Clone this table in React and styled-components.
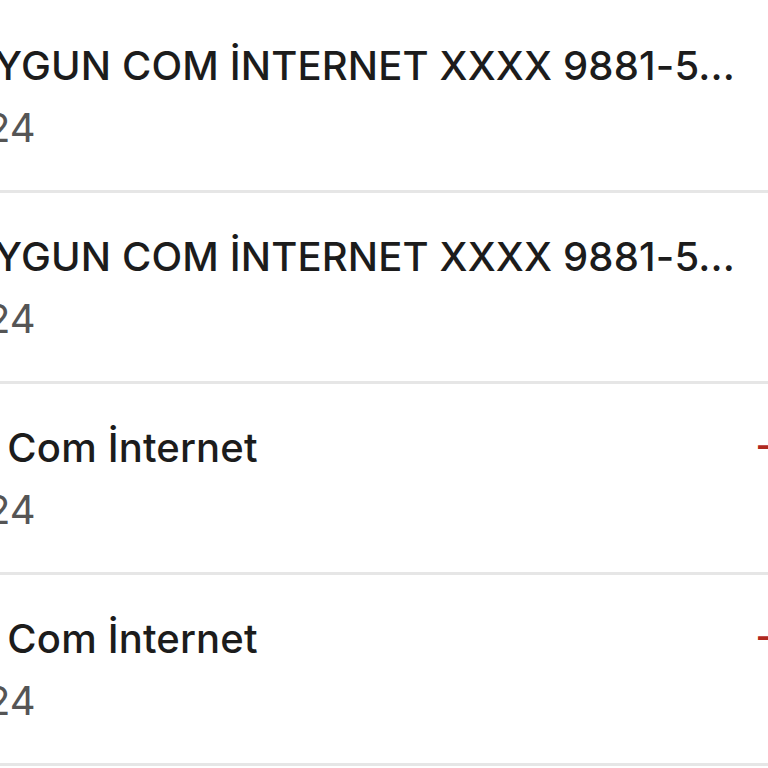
import React from "react";
import styled, { createGlobalStyle } from "styled-components";

const Global = createGlobalStyle`
  html, body {
    margin: 0;
    padding: 0;
    background: #ffffff;
    overflow: hidden;
  }
  body {
    font-family: Inter, "Noto Sans", "Liberation Sans", sans-serif;
  }
`;

const Viewport = styled.div`
  width: 768px;
  height: 768px;
  overflow: hidden;
  background: #ffffff;
`;

const List = styled.ul`
  list-style: none;
  margin: 0 0 0 -125px;
  padding: 2px 0 0;
  width: 1124px;
`;

const Row = styled.li`
  display: grid;
  grid-template-columns: minmax(0, 1fr) auto;
  column-gap: 24px;
  box-sizing: border-box;
  height: 191px;
  padding: 40px 0 0;
  border-bottom: 3px solid #e6e6e6;
`;

const Info = styled.div`
  display: flex;
  flex-direction: column;
  gap: 14px;
  min-width: 0;
`;

const Title = styled.div`
  font-size: 40px;
  line-height: 48px;
  font-weight: 500;
  letter-spacing: 0.15px;
  color: #1c1c1c;
  white-space: nowrap;
  overflow: hidden;
`;

const DateText = styled.div`
  font-size: 40px;
  line-height: 48px;
  font-weight: 400;
  color: #555555;
  white-space: nowrap;
`;

const Amount = styled.div`
  font-size: 40px;
  line-height: 48px;
  font-weight: 500;
  color: ${(p) => (p.$negative ? "#b0281f" : "#1c1c1c")};
  white-space: nowrap;
  text-align: right;
`;

const rows = [
  { title: "PAY*AYGUN COM İNTERNET XXXX 9881-5...", date: "04.2024", amount: "-89,90 TL" },
  { title: "PAY*AYGUN COM İNTERNET XXXX 9881-5...", date: "04.2024", amount: "-89,90 TL" },
  { title: "Aygun Com İnternet", date: "04.2024", amount: "-1.249,00 TL" },
  { title: "Aygun Com İnternet", date: "04.2024", amount: "-1.249,00 TL" },
];

export default function App() {
  return (
    <>
      <Global />
      <Viewport>
        <List>
          {rows.map((r, i) => (
            <Row key={i}>
              <Info>
                <Title>{r.title}</Title>
                <DateText>{r.date}</DateText>
              </Info>
              <Amount $negative>{r.amount}</Amount>
            </Row>
          ))}
        </List>
      </Viewport>
    </>
  );
}
